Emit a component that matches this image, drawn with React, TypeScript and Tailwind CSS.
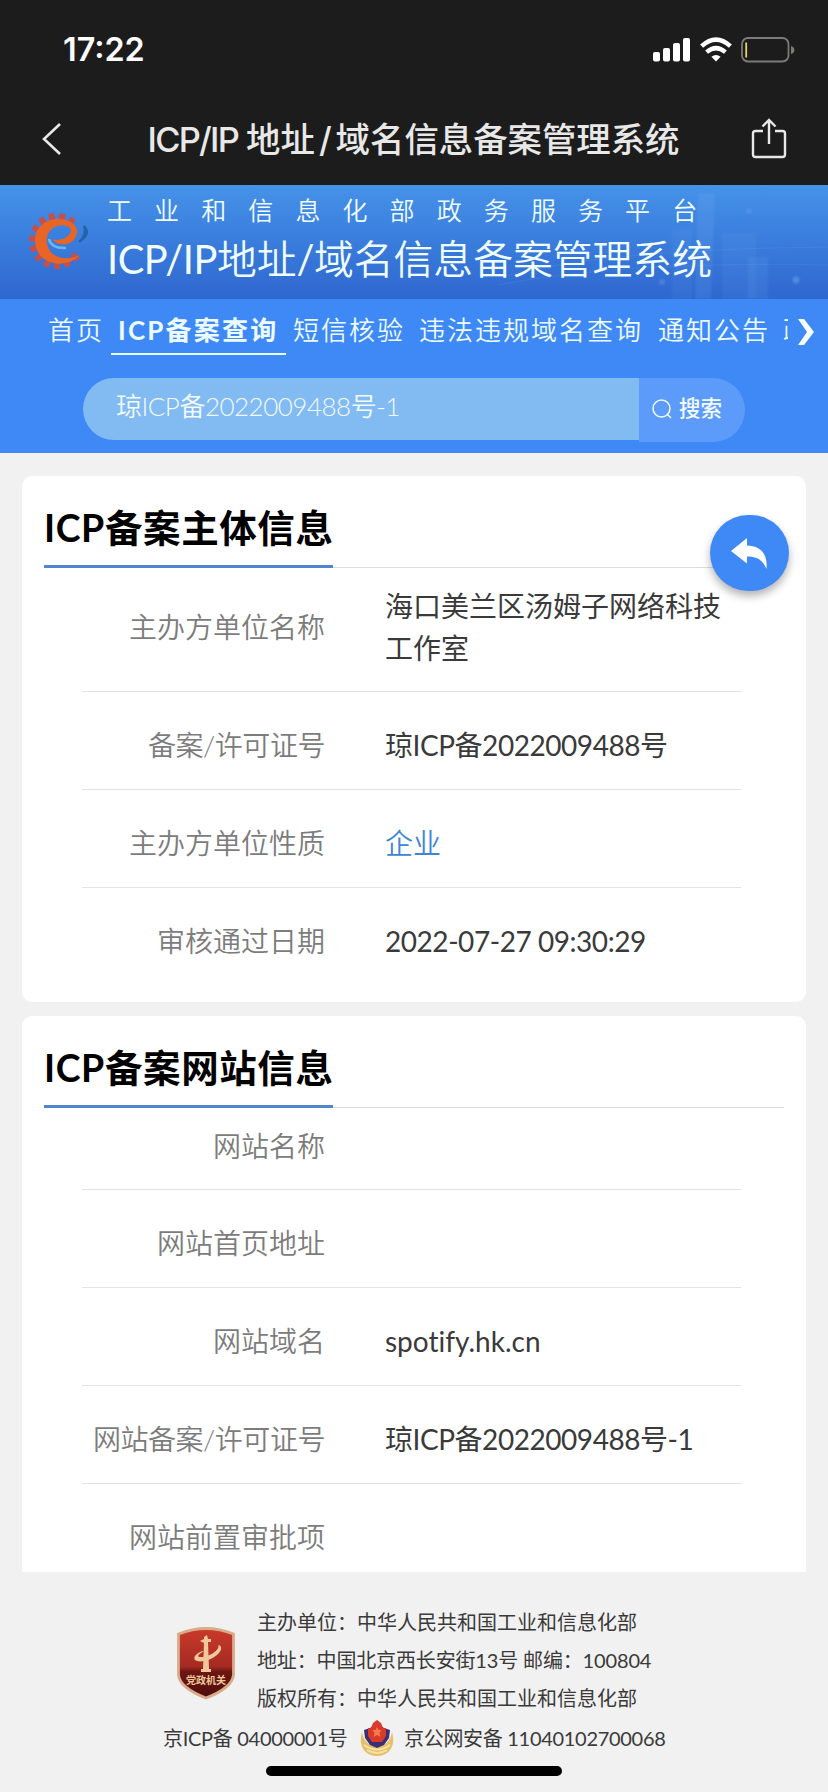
import React from "react";

type Row = {
  label: string;
  value?: string;
  link?: boolean;
  className: string;
};

const subjectRows: Row[] = [
  { label: "主办方单位名称", value: "海口美兰区汤姆子网络科技工作室", className: "h-[124px] pb-[6px]" },
  { label: "备案/许可证号", value: "琼ICP备2022009488号", className: "h-[98px] pt-[9px] tracking-[-0.45px]" },
  { label: "主办方单位性质", value: "企业", link: true, className: "h-[98px] pt-[9px]" },
  { label: "审核通过日期", value: "2022-07-27 09:30:29", className: "h-[105px] [&>:last-child]:tracking-[-0.45px]" },
];

const siteRows: Row[] = [
  { label: "网站名称", className: "h-[82px] pb-[6px]" },
  { label: "网站首页地址", className: "h-[98px] pt-[9px]" },
  { label: "网站域名", value: "spotify.hk.cn", className: "h-[98px] pt-[9px]" },
  { label: "网站备案/许可证号", value: "琼ICP备2022009488号-1", className: "h-[98px] pt-[9px] tracking-[-0.45px]" },
  { label: "网站前置审批项", className: "h-[106px]" },
];

const StatusBar = () => (
  <div className="flex h-[99px] items-center pl-[63px] pr-[33px]">
    <span className="mt-[2px] font-['Inter'] text-[32.300px] font-semibold leading-none text-white">17:22</span>
    <svg className="ml-auto" width="142" height="26" viewBox="0 0 142 26" fill="none">
      <g fill="#fff">
        <rect x="0" y="15" width="7" height="9.5" rx="2" />
        <rect x="10" y="11" width="7" height="13.5" rx="2" />
        <rect x="20" y="6" width="7" height="18.5" rx="2" />
        <rect x="30" y="1" width="7" height="23.5" rx="2" />
        <path d="M63 24.5l-4.6-4.8q4.6-3.4 9.2 0z" />
      </g>
      <path d="M48.600 9.200Q63-4 77.400 9.200" stroke="#fff" strokeWidth="4.4" />
      <path d="M53.6 15.2Q63 7 72.4 15.2" stroke="#fff" strokeWidth="4.4" />
      <rect x="89" y="1" width="46.5" height="23.5" rx="6" stroke="#7b7b78" strokeWidth="1.8" />
      <rect x="92.3" y="5.5" width="1.8" height="15" fill="#e5d565" />
      <path d="M138 9q3.4 1 3.4 4t-3.4 4z" fill="#7b7b78" />
    </svg>
  </div>
);

const TitleBar = () => (
  <div className="flex h-[86px] items-start justify-between pl-[41px] pr-[41px] pt-[19px]">
    <svg className="mt-[4px]" width="21" height="34" viewBox="0 0 21 34" fill="none">
      <path d="M19 2L3 17l16 15" stroke="#e8e8e8" strokeWidth="2.6" />
    </svg>
    <h1 className="ml-[14px] mt-[1px] whitespace-pre font-['Inter','Noto_Sans_CJK_SC',sans-serif] text-[34.4px] font-medium leading-[42px] text-[#e8e8e8]">
      <span className="tracking-[-1.7px]">ICP/IP</span>
      <span className="ml-[8px]">地址</span>
      <span className="mx-[4px]">/</span>
      <span>域名信息备案管理系统</span>
    </h1>
    <svg width="36" height="41" viewBox="0 0 36 41" fill="none" stroke="#e8e8e8" strokeWidth="2.4">
      <path d="M12 13H4.500Q2 13 2 15.500V36.500Q2 39 4.500 39H31.500Q34 39 34 36.500V15.500Q34 13 31.500 13H24" />
      <path d="M18 26V2.500M11.500 8.500L18 2l6.500 6.500" />
    </svg>
  </div>
);

// Orange gear wrapped around a lowercase "e"
const GearLogo = () => {
  const teeth = [42, 66, 90, 114, 138, 162, 186, 210, 234, 258, 282, 306];
  return (
    <svg width="66" height="62" viewBox="0 0 66 62" fill="none">
      <g stroke="#c4504c" strokeWidth="6">
        {teeth.map((deg) => {
          const a = (deg * Math.PI) / 180;
          return (
            <line
              key={deg}
              x1={30 + 20 * Math.cos(a)}
              y1={31 + 20 * Math.sin(a)}
              x2={30 + 28 * Math.cos(a)}
              y2={31 + 28 * Math.sin(a)}
            />
          );
        })}
      </g>
      <path
        d="M53 45C40 59 16 55 10 40C3 22 16 9 31 9C46 9 53 18 49 26C46 35 32 38 25 29C32 32 42 28 44 21C44 15 33 13 26 18C17 24 18 37 26 44C34 50 45 49 53 45Z"
        fill="#e96526"
      />
      <path d="M22 29Q24 38.500 39 38" stroke="#6db4f2" strokeWidth="2.500" />
      <path d="M57 16Q65 24 52 32Q60 25 57 16Z" fill="#2462ac" stroke="#2462ac" strokeWidth="2" />
    </svg>
  );
};

const Skyline = () => (
  <svg className="absolute right-0 top-0" width="330" height="114" viewBox="0 0 330 114" fill="none">
    <g fill="#8cc0ff" className="blur-[1px]">
      <path d="M200 8h17l-4 106h-16z" opacity=".13" />
      <rect x="174" y="42" width="20" height="72" opacity=".07" />
      <rect x="224" y="48" width="34" height="66" opacity=".07" />
      <rect x="250" y="72" width="20" height="42" opacity=".1" />
      <circle cx="298" cy="95" r="3.500" opacity=".35" />
      <circle cx="251" cy="26" r="3" opacity=".2" />
      <circle cx="164" cy="97" r="3" opacity=".25" />
    </g>
    <path d="M0 92Q110 64 330 62M0 100Q120 76 330 80" stroke="#8cc0ff" opacity=".12" />
  </svg>
);

const Banner = () => (
  <div className="relative flex h-[114px] items-start overflow-hidden bg-linear-to-b from-[#4692e9] to-[#2f67cf] pl-[27px] text-[#f0fdff]">
    <Skyline />
    <div className="mt-[25px] w-[80px]">
      <GearLogo />
    </div>
    <div className="relative whitespace-nowrap font-[350]">
      <div className="mt-[7px] text-[25px] leading-[36px] tracking-[22.1px]">工业和信息化部政务服务平台</div>
      <div className="mt-[6px] text-[39.800px] leading-[50px]">
        <span className="font-normal tracking-[-0.5px]">ICP/IP</span>地址<span className="font-normal tracking-[-0.5px]">/</span>
        域名信息备案管理系统
      </div>
    </div>
  </div>
);

const NavTabs = () => (
  <nav className="flex h-[60px] items-start whitespace-nowrap pl-[48px] pt-[11px] text-[26px] font-[350] leading-[40px] tracking-[2px] text-[#ecfbff]">
    <span className="w-[63px]">首页</span>
    <span className="h-[45px] w-[175px] border-b-2 border-[#e9fffb] pl-[7px] font-bold tracking-[2.2px]">ICP备案查询</span>
    <span className="ml-[7px] w-[126px]">短信核验</span>
    <span className="w-[239px]">违法违规域名查询</span>
    <span className="w-[125px]">通知公告</span>
    <span className="w-[5px] overflow-hidden">政策文件</span>
    <svg className="ml-[9px] mt-[8px]" width="18" height="28" viewBox="0 0 18 28">
      <path d="M1 1h6l10 13L7 27H1l9-13z" fill="#f4fdff" />
    </svg>
  </nav>
);

const SearchBar = () => (
  <div className="flex h-[94px] items-start pl-[83px] pt-[19px] text-[#f2fbff]">
    <div className="h-[62px] w-[556px] rounded-l-[31px] bg-[#82baf2] pl-[33px] pt-[8px] text-[26px] font-[350] leading-[40px] tracking-[-0.5px]">
      琼ICP备2022009488号-1
    </div>
    <div className="flex h-[64px] w-[106px] items-center rounded-r-[32px] bg-[#5c9bf9] pl-[13px]">
      <svg className="mb-[3px]" width="20" height="20" viewBox="0 0 20 20" fill="none" stroke="#f2fbff" strokeWidth="1.500">
        <circle cx="9.500" cy="9.500" r="8.500" />
        <path d="M15 15l4 4" />
      </svg>
      <span className="mb-[4px] ml-[7px] text-[21.500px] font-medium leading-[30px]">搜索</span>
    </div>
  </div>
);

const InfoCard = ({ title, rows, className }: { title: string; rows: Row[]; className: string }) => (
  <section className={`mx-[22px] overflow-hidden bg-white ${className}`}>
    <div className="mx-[22px] flex h-[92px] border-b border-[#dcdcdc]">
      <h2 className="h-[92px] w-[289px] whitespace-nowrap border-b-[3px] border-[#5086cf] pt-[28px] text-[37.500px] font-bold leading-[48px] tracking-[0.6px] text-black">
        {title}
      </h2>
    </div>
    <div className="ml-[60px] mr-[65px]">
      {rows.map((row) => (
        <div
          key={row.label}
          className={`flex items-center border-b border-[#e3e3e3] text-[28px] leading-[42px] [font-variant-ligatures:none] last:border-0 ${row.className}`}
        >
          <div className="w-[243px] shrink-0 whitespace-nowrap text-right font-[350] text-[#7c7c7c]">{row.label}</div>
          <div className={`ml-[60px] w-[340px] ${row.link ? "font-[350] text-[#3c86d3]" : "text-[#3a3a3a]"}`}>
            {row.value}
          </div>
        </div>
      ))}
    </div>
  </section>
);

const BackButton = () => (
  <button className="absolute left-[710px] top-[515px] flex h-[76px] w-[79px] items-center justify-center rounded-full bg-[#3f89f6] shadow-[0_5px_8px_rgba(0,0,0,0.3)]">
    <svg width="37" height="31" viewBox="0 0 37 31">
      <path d="M0 13L16 0v7.500C29 8 37 15 35.500 31C32 22 26 18.500 16 18.500V25.500Z" fill="#fff" />
    </svg>
  </button>
);

const PartyShield = () => (
  <svg width="58" height="73" viewBox="0 0 58 73">
    <defs>
      <linearGradient id="shield" x1="0" y1="0" x2="0" y2="1">
        <stop offset="0" stopColor="#c93a2a" />
        <stop offset=".55" stopColor="#a52a22" />
        <stop offset=".62" stopColor="#6d1613" />
        <stop offset="1" stopColor="#4c0f0c" />
      </linearGradient>
    </defs>
    <path d="M1.500 7Q29-4 56.500 7V48Q55 61 29 71Q3 61 1.500 48Z" fill="url(#shield)" stroke="#d9ab8a" strokeWidth="2.800" />
    <g fill="#f0c79b">
      <path d="M27 10l3-2 1 4h3v3h-3l1 27h2v3H24v-3h2l1-26-4-2 4-2z" />
      <path d="M41 18c7 1 2 11-10 15-9 3-16 1-13-4 2-3 6-5 9-5-7 4-7 6-3 6 9 0 20-8 17-12z" />
    </g>
    <text x="29" y="57" textAnchor="middle" fontSize="10" fontWeight="700" fill="#f0c79b">
      党政机关
    </text>
  </svg>
);

const PoliceBadge = () => (
  <svg width="36" height="38" viewBox="0 0 36 38">
    <path d="M3 13C-1 26 5 37 18 37S37 26 33 13Q31 26 18 28Q5 26 3 13Z" fill="#e6c069" />
    <path d="M5 26q13 9 26 0M8 31q10 6 20 0" stroke="#f7e3a4" strokeWidth="2" fill="none" />
    <path d="M5 11l6-2 7-5 7 5 6 2-1 8-5 7-7 3-7-3-5-7z" fill="#3b2f74" />
    <path d="M9 9l3 0 2-5 4-3 4 3 2 5 3 0 0 8-4 6H13l-4-6z" fill="#d93a2b" />
    <path d="M18 8l1.500 3h3l-2 3 1 4-3.500-2-3.500 2 1-4-2-3h3z" fill="#f47a48" />
  </svg>
);

const Footer = () => (
  <footer className="h-[220px] text-[20px] leading-[38px] text-[#3a3a3a]">
    <div className="flex whitespace-nowrap pl-[177px] pt-[31px]">
      <div className="mt-[24px] w-[80px]">
        <PartyShield />
      </div>
      <div>
        <p>主办单位：中华人民共和国工业和信息化部</p>
        <p className="tracking-[-0.15px]">地址：中国北京西长安街13号 邮编：100804</p>
        <p>版权所有：中华人民共和国工业和信息化部</p>
      </div>
    </div>
    <div className="mt-[1px] flex h-[40px] items-center whitespace-nowrap pl-[163px] tracking-[-0.3px]">
      <span className="w-[196px]">京ICP备 04000001号</span>
      <PoliceBadge />
      <span className="ml-[9px]">京公网安备 11040102700068</span>
    </div>
    <div className="mx-auto mt-[8px] h-[10px] w-[296px] rounded-full bg-black" />
  </footer>
);

export default function App() {
  return (
    <div className="relative h-[1792px] w-[828px] overflow-hidden bg-[#f1f1f1] font-['Lato','Noto_Sans_CJK_SC',sans-serif]">
      <header className="h-[185px] bg-[#1c1c1c]">
        <StatusBar />
        <TitleBar />
      </header>
      <Banner />
      <div className="h-[154px] bg-[#3f89f6]">
        <NavTabs />
        <SearchBar />
      </div>
      <InfoCard title="ICP备案主体信息" rows={subjectRows} className="mt-[23px] h-[526px] rounded-[10px]" />
      <InfoCard title="ICP备案网站信息" rows={siteRows} className="mt-[14px] h-[556px] rounded-t-[10px]" />
      <Footer />
      <BackButton />
    </div>
  );
}
